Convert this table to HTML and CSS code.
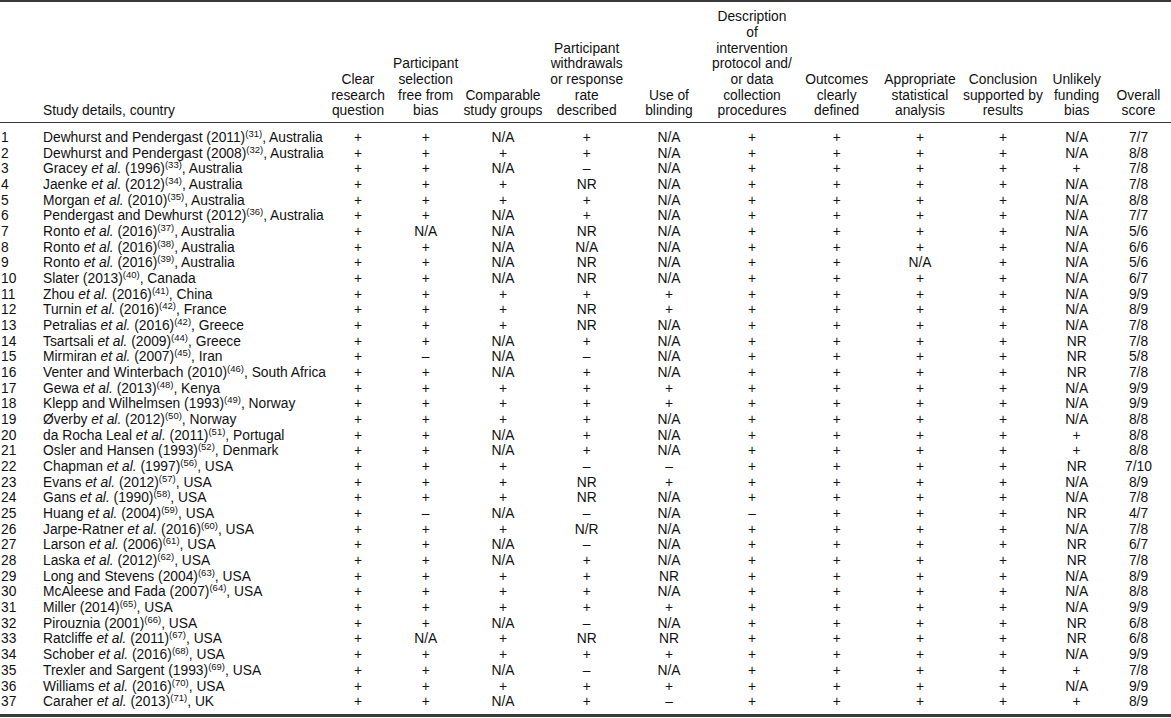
FILE: index.html
```html
<!DOCTYPE html>
<html lang="en">
<head>
<meta charset="utf-8">
<title>Quality assessment of included studies</title>
<link rel="stylesheet" href="styles.css">
</head>
<body>
<table class="qa">
<colgroup>
<col class="w-num"><col class="w-study"><col class="w-c3"><col class="w-c4"><col class="w-c5"><col class="w-c6"><col class="w-c7"><col class="w-c8"><col class="w-c9"><col class="w-c10"><col class="w-c11"><col class="w-c12"><col class="w-c13">
</colgroup>
<thead>
<tr>
<th class="num"></th>
<th class="study">Study details, country</th>
<th>Clear<br>research<br>question</th>
<th>Participant<br>selection<br>free from<br>bias</th>
<th>Comparable<br>study groups</th>
<th>Participant<br>withdrawals<br>or response<br>rate<br>described</th>
<th>Use of<br>blinding</th>
<th>Description<br>of<br>intervention<br>protocol and/<br>or data<br>collection<br>procedures</th>
<th>Outcomes<br>clearly<br>defined</th>
<th>Appropriate<br>statistical<br>analysis</th>
<th>Conclusion<br>supported by<br>results</th>
<th>Unlikely<br>funding<br>bias</th>
<th>Overall<br>score</th>
</tr>
</thead>
<tbody>
<tr><td class="num">1</td><td class="study">Dewhurst and Pendergast (2011)<sup>(31)</sup>, Australia</td><td>+</td><td>+</td><td>N/A</td><td>+</td><td>N/A</td><td>+</td><td>+</td><td>+</td><td>+</td><td>N/A</td><td>7/7</td></tr>
<tr><td class="num">2</td><td class="study">Dewhurst and Pendergast (2008)<sup>(32)</sup>, Australia</td><td>+</td><td>+</td><td>+</td><td>+</td><td>N/A</td><td>+</td><td>+</td><td>+</td><td>+</td><td>N/A</td><td>8/8</td></tr>
<tr><td class="num">3</td><td class="study">Gracey <i>et al.</i> (1996)<sup>(33)</sup>, Australia</td><td>+</td><td>+</td><td>N/A</td><td>–</td><td>N/A</td><td>+</td><td>+</td><td>+</td><td>+</td><td>+</td><td>7/8</td></tr>
<tr><td class="num">4</td><td class="study">Jaenke <i>et al.</i> (2012)<sup>(34)</sup>, Australia</td><td>+</td><td>+</td><td>+</td><td>NR</td><td>N/A</td><td>+</td><td>+</td><td>+</td><td>+</td><td>N/A</td><td>7/8</td></tr>
<tr><td class="num">5</td><td class="study">Morgan <i>et al.</i> (2010)<sup>(35)</sup>, Australia</td><td>+</td><td>+</td><td>+</td><td>+</td><td>N/A</td><td>+</td><td>+</td><td>+</td><td>+</td><td>N/A</td><td>8/8</td></tr>
<tr><td class="num">6</td><td class="study">Pendergast and Dewhurst (2012)<sup>(36)</sup>, Australia</td><td>+</td><td>+</td><td>N/A</td><td>+</td><td>N/A</td><td>+</td><td>+</td><td>+</td><td>+</td><td>N/A</td><td>7/7</td></tr>
<tr><td class="num">7</td><td class="study">Ronto <i>et al.</i> (2016)<sup>(37)</sup>, Australia</td><td>+</td><td>N/A</td><td>N/A</td><td>NR</td><td>N/A</td><td>+</td><td>+</td><td>+</td><td>+</td><td>N/A</td><td>5/6</td></tr>
<tr><td class="num">8</td><td class="study">Ronto <i>et al.</i> (2016)<sup>(38)</sup>, Australia</td><td>+</td><td>+</td><td>N/A</td><td>N/A</td><td>N/A</td><td>+</td><td>+</td><td>+</td><td>+</td><td>N/A</td><td>6/6</td></tr>
<tr><td class="num">9</td><td class="study">Ronto <i>et al.</i> (2016)<sup>(39)</sup>, Australia</td><td>+</td><td>+</td><td>N/A</td><td>NR</td><td>N/A</td><td>+</td><td>+</td><td>N/A</td><td>+</td><td>N/A</td><td>5/6</td></tr>
<tr><td class="num">10</td><td class="study">Slater (2013)<sup>(40)</sup>, Canada</td><td>+</td><td>+</td><td>N/A</td><td>NR</td><td>N/A</td><td>+</td><td>+</td><td>+</td><td>+</td><td>N/A</td><td>6/7</td></tr>
<tr><td class="num">11</td><td class="study">Zhou <i>et al.</i> (2016)<sup>(41)</sup>, China</td><td>+</td><td>+</td><td>+</td><td>+</td><td>+</td><td>+</td><td>+</td><td>+</td><td>+</td><td>N/A</td><td>9/9</td></tr>
<tr><td class="num">12</td><td class="study">Turnin <i>et al.</i> (2016)<sup>(42)</sup>, France</td><td>+</td><td>+</td><td>+</td><td>NR</td><td>+</td><td>+</td><td>+</td><td>+</td><td>+</td><td>N/A</td><td>8/9</td></tr>
<tr><td class="num">13</td><td class="study">Petralias <i>et al.</i> (2016)<sup>(42)</sup>, Greece</td><td>+</td><td>+</td><td>+</td><td>NR</td><td>N/A</td><td>+</td><td>+</td><td>+</td><td>+</td><td>N/A</td><td>7/8</td></tr>
<tr><td class="num">14</td><td class="study">Tsartsali <i>et al.</i> (2009)<sup>(44)</sup>, Greece</td><td>+</td><td>+</td><td>N/A</td><td>+</td><td>N/A</td><td>+</td><td>+</td><td>+</td><td>+</td><td>NR</td><td>7/8</td></tr>
<tr><td class="num">15</td><td class="study">Mirmiran <i>et al.</i> (2007)<sup>(45)</sup>, Iran</td><td>+</td><td>–</td><td>N/A</td><td>–</td><td>N/A</td><td>+</td><td>+</td><td>+</td><td>+</td><td>NR</td><td>5/8</td></tr>
<tr><td class="num">16</td><td class="study">Venter and Winterbach (2010)<sup>(46)</sup>, South Africa</td><td>+</td><td>+</td><td>N/A</td><td>+</td><td>N/A</td><td>+</td><td>+</td><td>+</td><td>+</td><td>NR</td><td>7/8</td></tr>
<tr><td class="num">17</td><td class="study">Gewa <i>et al.</i> (2013)<sup>(48)</sup>, Kenya</td><td>+</td><td>+</td><td>+</td><td>+</td><td>+</td><td>+</td><td>+</td><td>+</td><td>+</td><td>N/A</td><td>9/9</td></tr>
<tr><td class="num">18</td><td class="study">Klepp and Wilhelmsen (1993)<sup>(49)</sup>, Norway</td><td>+</td><td>+</td><td>+</td><td>+</td><td>+</td><td>+</td><td>+</td><td>+</td><td>+</td><td>N/A</td><td>9/9</td></tr>
<tr><td class="num">19</td><td class="study">Øverby <i>et al.</i> (2012)<sup>(50)</sup>, Norway</td><td>+</td><td>+</td><td>+</td><td>+</td><td>N/A</td><td>+</td><td>+</td><td>+</td><td>+</td><td>N/A</td><td>8/8</td></tr>
<tr><td class="num">20</td><td class="study">da Rocha Leal <i>et al.</i> (2011)<sup>(51)</sup>, Portugal</td><td>+</td><td>+</td><td>N/A</td><td>+</td><td>N/A</td><td>+</td><td>+</td><td>+</td><td>+</td><td>+</td><td>8/8</td></tr>
<tr><td class="num">21</td><td class="study">Osler and Hansen (1993)<sup>(52)</sup>, Denmark</td><td>+</td><td>+</td><td>N/A</td><td>+</td><td>N/A</td><td>+</td><td>+</td><td>+</td><td>+</td><td>+</td><td>8/8</td></tr>
<tr><td class="num">22</td><td class="study">Chapman <i>et al.</i> (1997)<sup>(56)</sup>, USA</td><td>+</td><td>+</td><td>+</td><td>–</td><td>–</td><td>+</td><td>+</td><td>+</td><td>+</td><td>NR</td><td>7/10</td></tr>
<tr><td class="num">23</td><td class="study">Evans <i>et al.</i> (2012)<sup>(57)</sup>, USA</td><td>+</td><td>+</td><td>+</td><td>NR</td><td>+</td><td>+</td><td>+</td><td>+</td><td>+</td><td>N/A</td><td>8/9</td></tr>
<tr><td class="num">24</td><td class="study">Gans <i>et al.</i> (1990)<sup>(58)</sup>, USA</td><td>+</td><td>+</td><td>+</td><td>NR</td><td>N/A</td><td>+</td><td>+</td><td>+</td><td>+</td><td>N/A</td><td>7/8</td></tr>
<tr><td class="num">25</td><td class="study">Huang <i>et al.</i> (2004)<sup>(59)</sup>, USA</td><td>+</td><td>–</td><td>N/A</td><td>–</td><td>N/A</td><td>–</td><td>+</td><td>+</td><td>+</td><td>NR</td><td>4/7</td></tr>
<tr><td class="num">26</td><td class="study">Jarpe-Ratner <i>et al.</i> (2016)<sup>(60)</sup>, USA</td><td>+</td><td>+</td><td>+</td><td>N/R</td><td>N/A</td><td>+</td><td>+</td><td>+</td><td>+</td><td>N/A</td><td>7/8</td></tr>
<tr><td class="num">27</td><td class="study">Larson <i>et al.</i> (2006)<sup>(61)</sup>, USA</td><td>+</td><td>+</td><td>N/A</td><td>–</td><td>N/A</td><td>+</td><td>+</td><td>+</td><td>+</td><td>NR</td><td>6/7</td></tr>
<tr><td class="num">28</td><td class="study">Laska <i>et al.</i> (2012)<sup>(62)</sup>, USA</td><td>+</td><td>+</td><td>N/A</td><td>+</td><td>N/A</td><td>+</td><td>+</td><td>+</td><td>+</td><td>NR</td><td>7/8</td></tr>
<tr><td class="num">29</td><td class="study">Long and Stevens (2004)<sup>(63)</sup>, USA</td><td>+</td><td>+</td><td>+</td><td>+</td><td>NR</td><td>+</td><td>+</td><td>+</td><td>+</td><td>N/A</td><td>8/9</td></tr>
<tr><td class="num">30</td><td class="study">McAleese and Fada (2007)<sup>(64)</sup>, USA</td><td>+</td><td>+</td><td>+</td><td>+</td><td>N/A</td><td>+</td><td>+</td><td>+</td><td>+</td><td>N/A</td><td>8/8</td></tr>
<tr><td class="num">31</td><td class="study">Miller (2014)<sup>(65)</sup>, USA</td><td>+</td><td>+</td><td>+</td><td>+</td><td>+</td><td>+</td><td>+</td><td>+</td><td>+</td><td>N/A</td><td>9/9</td></tr>
<tr><td class="num">32</td><td class="study">Pirouznia (2001)<sup>(66)</sup>, USA</td><td>+</td><td>+</td><td>N/A</td><td>–</td><td>N/A</td><td>+</td><td>+</td><td>+</td><td>+</td><td>NR</td><td>6/8</td></tr>
<tr><td class="num">33</td><td class="study">Ratcliffe <i>et al.</i> (2011)<sup>(67)</sup>, USA</td><td>+</td><td>N/A</td><td>+</td><td>NR</td><td>NR</td><td>+</td><td>+</td><td>+</td><td>+</td><td>NR</td><td>6/8</td></tr>
<tr><td class="num">34</td><td class="study">Schober <i>et al.</i> (2016)<sup>(68)</sup>, USA</td><td>+</td><td>+</td><td>+</td><td>+</td><td>+</td><td>+</td><td>+</td><td>+</td><td>+</td><td>N/A</td><td>9/9</td></tr>
<tr><td class="num">35</td><td class="study">Trexler and Sargent (1993)<sup>(69)</sup>, USA</td><td>+</td><td>+</td><td>N/A</td><td>–</td><td>N/A</td><td>+</td><td>+</td><td>+</td><td>+</td><td>+</td><td>7/8</td></tr>
<tr><td class="num">36</td><td class="study">Williams <i>et al.</i> (2016)<sup>(70)</sup>, USA</td><td>+</td><td>+</td><td>+</td><td>+</td><td>+</td><td>+</td><td>+</td><td>+</td><td>+</td><td>N/A</td><td>9/9</td></tr>
<tr><td class="num">37</td><td class="study">Caraher <i>et al.</i> (2013)<sup>(71)</sup>, UK</td><td>+</td><td>+</td><td>N/A</td><td>+</td><td>–</td><td>+</td><td>+</td><td>+</td><td>+</td><td>+</td><td>8/9</td></tr>
</tbody>
</table>
</body>
</html>
```

FILE: styles.css
```css
html, body {
  margin: 0;
  padding: 0;
  background: #ffffff;
}

body {
  font-family: "Liberation Sans", Arial, Helvetica, sans-serif;
  font-size: 13.8px;
  color: #111111;
}

.qa {
  width: 1171px;
  table-layout: fixed;
  border-collapse: separate;
  border-spacing: 0;
  border-top: 2px solid #3a3a3a;
  border-bottom: 3px solid #3a3a3a;
}

.w-num { width: 38px; }
.w-study { width: 285.2px; }
.w-c3 { width: 69.6px; }
.w-c4 { width: 65.8px; }
.w-c5 { width: 88.8px; }
.w-c6 { width: 78.6px; }
.w-c7 { width: 86px; }
.w-c8 { width: 80px; }
.w-c9 { width: 89.4px; }
.w-c10 { width: 77.2px; }
.w-c11 { width: 88.8px; }
.w-c12 { width: 58.6px; }
.w-c13 { width: 65px; }

.qa th {
  font-weight: normal;
  text-align: center;
  vertical-align: bottom;
  line-height: 15.667px;
  padding: 7.3px 0 3.2px 0;
  border-bottom: 1px solid #3a3a3a;
  white-space: nowrap;
}

.qa td {
  text-align: center;
  vertical-align: top;
  line-height: 15.667px;
  padding: 0;
  white-space: nowrap;
}

.qa tbody tr:first-child td {
  padding-top: 6.8px;
}

.qa tbody tr:last-child td {
  padding-bottom: 4.6px;
}

.qa .num {
  text-align: left;
  padding-left: 1px;
}

.qa .study {
  text-align: left;
  padding-left: 5px;
}

.qa sup {
  font-size: 9.5px;
  line-height: 0;
  vertical-align: 5px;
}
```
